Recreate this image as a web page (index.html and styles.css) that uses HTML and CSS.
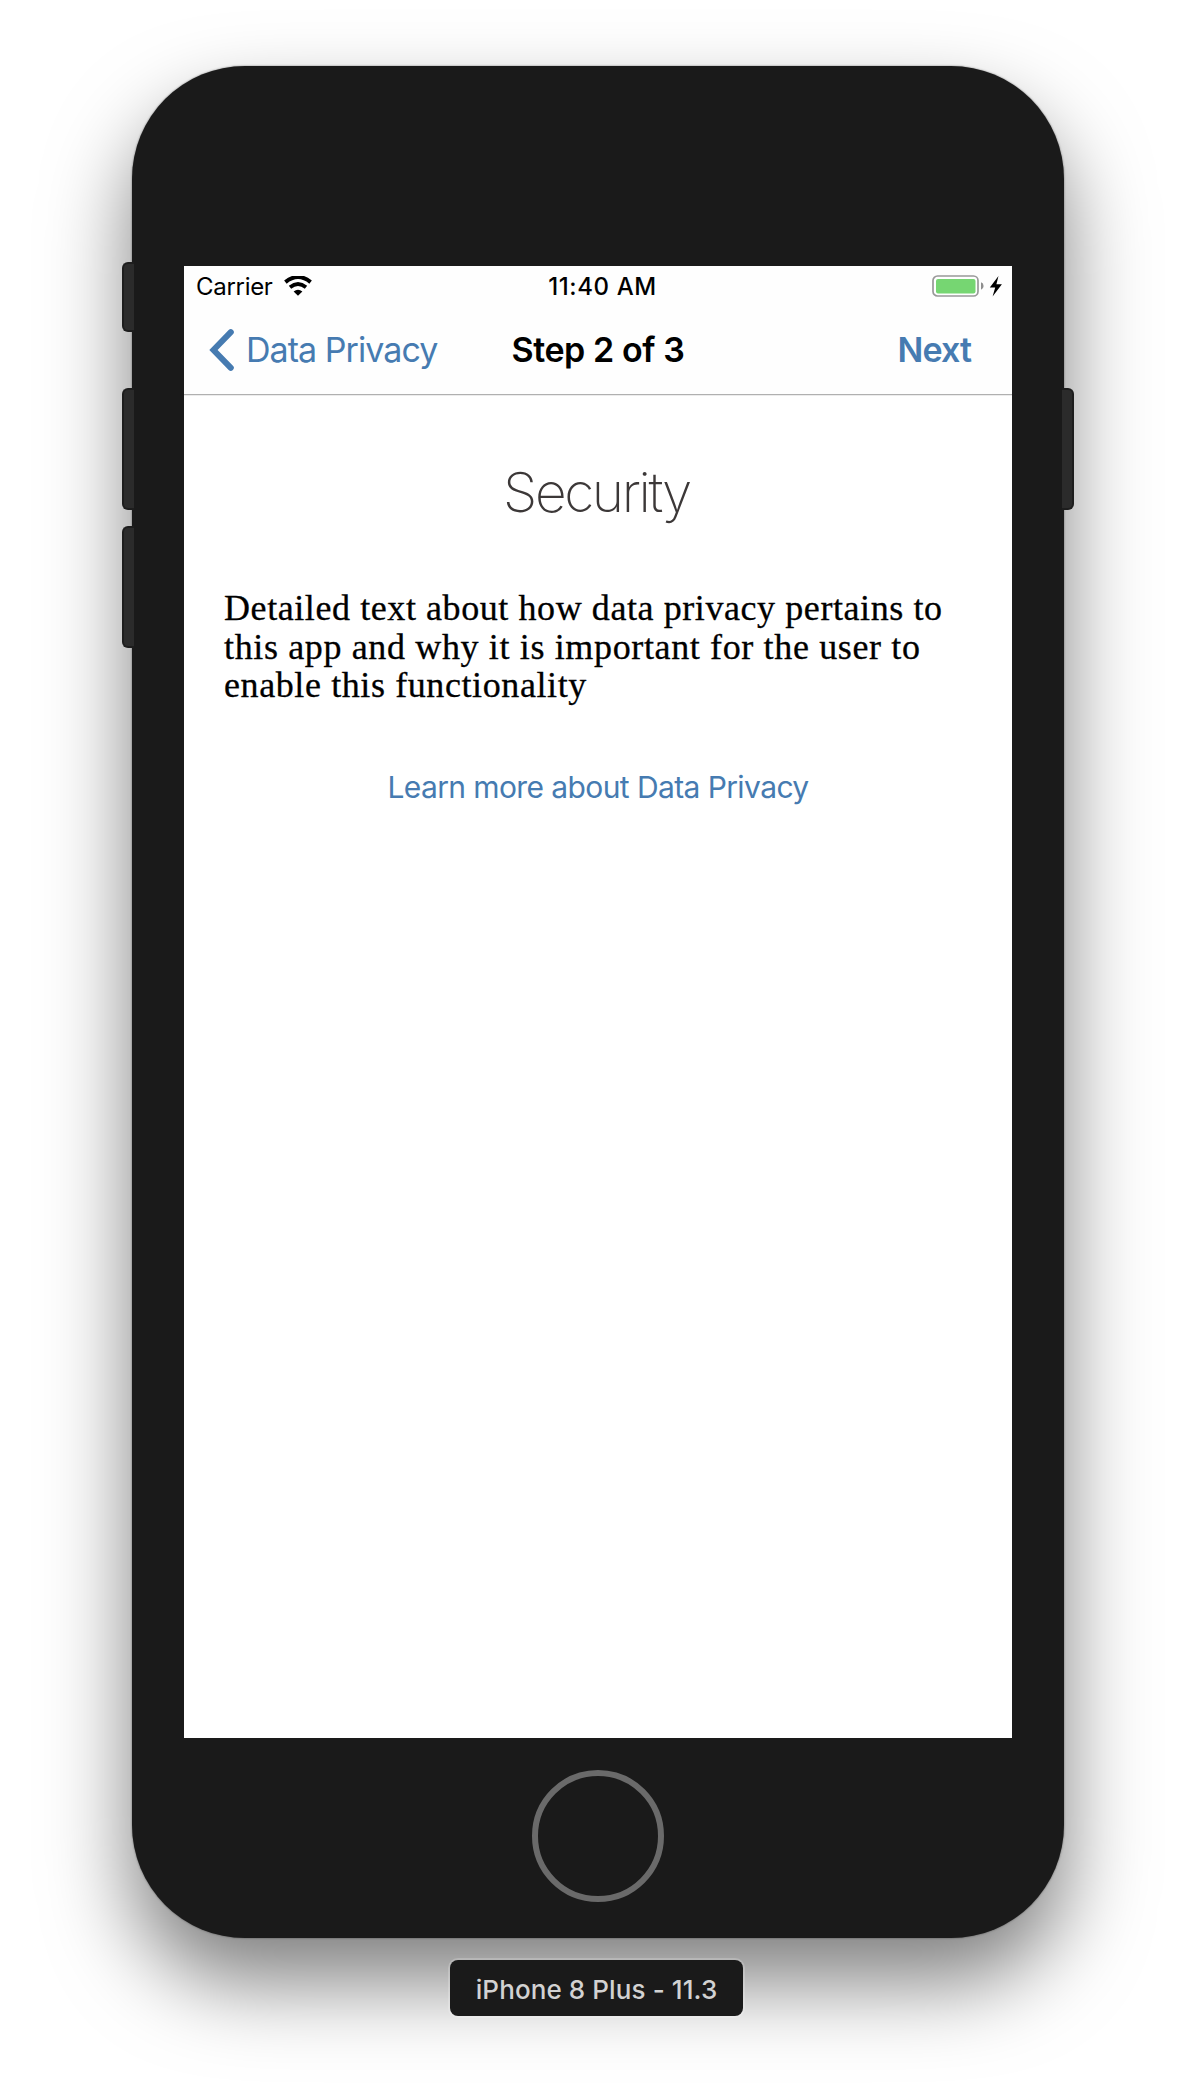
FILE: index.html
```html
<!DOCTYPE html>
<html lang="en">
<head>
<meta charset="utf-8">
<title>Security</title>
<link rel="stylesheet" href="styles.css">
</head>
<body>
<div class="device">
  <i class="key key-mute"></i>
  <i class="key key-up"></i>
  <i class="key key-down"></i>
  <i class="key key-power"></i>
  <main class="screen">
    <header class="bar">
      <div class="status">
        <div class="carrier">
          <span class="carrier-name">Carrier</span>
          <svg class="wifi" width="28" height="20" viewBox="0 0 28 20">
            <path d="M1.4 6.1Q14-4.1 26.6 6.1" fill="none" stroke="#000" stroke-width="4"/>
            <path d="M6 11.2Q14 4.9 22 11.2" fill="none" stroke="#000" stroke-width="3.8"/>
            <path d="M9.6 15.4Q14 12 18.4 15.4L14 19.8Z"/>
          </svg>
        </div>
        <span class="time">11:40 AM</span>
        <div class="power">
          <svg width="72" height="24" viewBox="0 0 72 24">
            <rect x="1" y="2" width="45" height="20" rx="4.5" fill="#fff" stroke="#999" stroke-width="1.7"/>
            <rect x="4" y="5" width="39.5" height="14.5" rx="2" fill="#76d672"/>
            <path d="M49 8.2Q51.6 9 51.6 12T49 15.8Z" fill="#8e8e8e"/>
            <path d="M66.5 2L57.8 13.4H63.2L60.6 22.6L69.9 10.3H64.4Z"/>
          </svg>
        </div>
      </div>
      <nav class="nav">
        <a class="back">
          <svg width="26" height="44" viewBox="0 0 26 44"><path d="M21.8 4.2L4.5 22L21.8 39.8" fill="none" stroke="#467bb1" stroke-width="6" stroke-linecap="round" stroke-linejoin="miter"/></svg>
          <span class="back-label">Data Privacy</span>
        </a>
        <span class="title">Step 2 of 3</span>
        <a class="next">Next</a>
      </nav>
    </header>
    <h1 class="heading"><span>Security</span></h1>
    <p class="body-text">
      <span class="line line-1">Detailed text about how data privacy pertains to</span>
      <span class="line line-2">this app and why it is important for the user to</span>
      <span class="line line-3">enable this functionality</span>
    </p>
    <a class="learn">Learn more about Data Privacy</a>
  </main>
  <div class="home"></div>
</div>
<div class="device-name">iPhone 8 Plus - 11.3</div>
</body>
</html>
```
FILE: styles.css
```css
* { box-sizing: border-box; }
body {
  margin: 0;
  height: 2100px;
  padding-top: 66px;
  background: #fff;
  font-family: Inter, "Liberation Sans", sans-serif;
  color: #000;
  overflow: hidden;
}
.device {
  position: relative;
  width: 932px;
  height: 1872px;
  margin: 0 auto;
  padding: 200px 52px 0;
  background: #1a1a1a;
  border-radius: 113px;
  box-shadow: 0 0 2px rgba(0,0,0,.5), 0 44px 84px rgba(0,0,0,.5);
}
.key {
  position: absolute;
  left: -10px;
  width: 12px;
  height: 122px;
  background: #2b2b2b;
  border: 2px solid #1d1d1d;
  border-right: 0;
  border-radius: 6px 0 0 6px;
}
.key-mute { top: 196px; height: 70px; }
.key-up { top: 322px; }
.key-down { top: 460px; }
.key-power {
  top: 322px;
  left: 930px;
  border: 2px solid #1d1d1d;
  border-left: 0;
  border-radius: 0 6px 6px 0;
}
.screen {
  display: flex;
  flex-direction: column;
  width: 828px;
  height: 1472px;
  background: #fff;
}
.bar {
  height: 129px;
  background: #fefefe;
  border-bottom: 1px solid #b0b0b0;
  box-shadow: 0 1px 0 #ececec;
}
.status, .nav {
  display: grid;
  grid-template-columns: minmax(0, 1fr) auto minmax(0, 1fr);
  align-items: center;
  white-space: nowrap;
}
.status {
  height: 40px;
  padding: 0 8px 0 12px;
  font-size: 24px;
}
.carrier, .back { display: flex; align-items: center; }
.carrier { gap: 11px; }
.carrier-name { letter-spacing: -.3px; padding-top: 1px; }
.time { font-weight: 500; margin-left: 5px; letter-spacing: .6px; padding-top: 1px; }
.power { display: flex; justify-content: flex-end; }
.nav {
  height: 88px;
  padding: 0 25px;
  font-size: 34px;
}
.back { gap: 11px; color: #467bb1; }
.back-label { letter-spacing: -.95px; }
.back-label, .title, .next { padding-bottom: 1px; }
.title { font-weight: 600; letter-spacing: -.4px; }
.next {
  margin-right: 16px;
  font-weight: 600;
  letter-spacing: -.9px;
  color: #467bb1;
  text-align: right;
}
.heading {
  margin: 62px 0 0;
  height: 70px;
  line-height: 70px;
  padding-right: 3px;
  font-size: 55px;
  font-weight: 200;
  letter-spacing: -2.4px;
  color: #3c3838;
  text-align: center;
}
.body-text {
  margin: 62px 40px 0;
  font-family: Georgia, "Liberation Serif", serif;
  font-size: 36px;
  -webkit-text-stroke: .3px #000;
}
.line {
  display: block;
  width: max-content;
  height: 38.6px;
  line-height: 38.6px;
  white-space: nowrap;
}
.line-1 { letter-spacing: .58px; }
.line-2 { letter-spacing: .64px; }
.line-3 { letter-spacing: .6px; }
.learn {
  margin-top: 62px;
  line-height: 40px;
  font-size: 30px;
  letter-spacing: -.6px;
  color: #467bb1;
  text-align: center;
}
.home {
  width: 132px;
  height: 132px;
  margin: 32px auto 0;
  border: 6px solid #6a6a6a;
  border-radius: 50%;
}
.device-name {
  position: relative;
  width: 293px;
  height: 56px;
  margin: 22px 0 0 450px;
  padding-top: 2px;
  line-height: 56px;
  font-size: 26px;
  font-weight: 500;
  letter-spacing: .1px;
  text-align: center;
  white-space: nowrap;
  color: #d2d2d2;
  background: #1a1a1a;
  border-radius: 8px;
  box-shadow: 0 0 0 2px rgba(255,255,255,.2);
}
```
